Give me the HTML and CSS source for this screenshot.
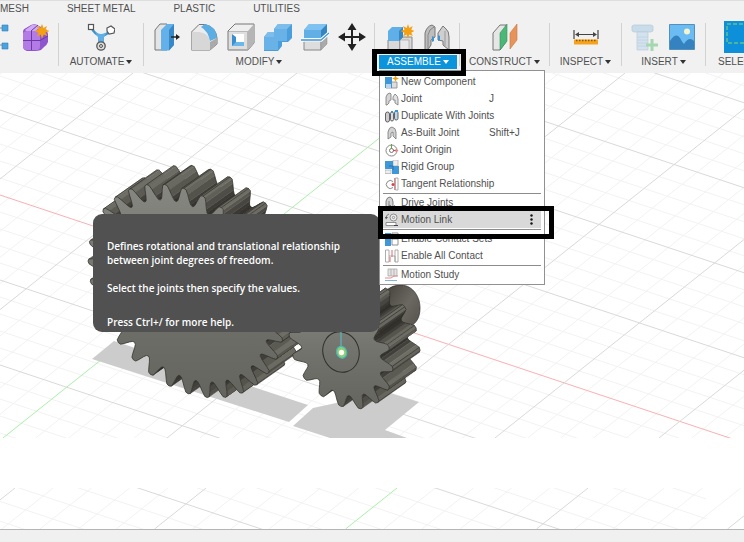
FILE: index.html
```html
<!DOCTYPE html>
<html lang="en">
<head>
<meta charset="utf-8">
<title>Assemble – Motion Link</title>
<meta name="viewport" content="width=device-width, initial-scale=1">
<link rel="stylesheet" href="styles.css">
</head>
<body>
<div class="app">
  <header class="ribbon">
    <nav class="tabs">
      <a href="#mesh">MESH</a>
      <a href="#sheet">SHEET METAL</a>
      <a href="#plastic">PLASTIC</a>
      <a href="#utilities">UTILITIES</a>
    </nav>
    <div class="groups">
      <section class="group group-first">
        <div class="icons">
          <svg class="icon" viewBox="0 0 28 28"><path d="M0 5H20M10 5V22M0 22H20" fill="none" stroke="#8a8a8a"/><path d="M18 2h6v6h-6zM18 20h6v6h-6z" fill="#4ba3e0" stroke="#2f82bd" stroke-width=".6"/></svg>
          <svg class="icon" viewBox="0 0 28 28"><path d="M2 9Q2 6 5 5L10 2Q12 1 15 1.500L24 6Q27 8 27 11V19Q26 22 23 24L20 27Q17 28 14 28H6Q2 27 2 23Z" fill="#8e55cc"/><path d="M2 10Q3 8 6 8H16Q19 8 19 12V23Q19 27 16 27H6Q2 27 2 23Z" fill="#b27be6"/><path d="M4 7L11 2Q15 1 19 4L15 8H5Z" fill="#d0aaf2"/><path d="M2 17.500H19L27 13M10.500 8V27M19 11L26 7M10 8L17 2" fill="none" stroke="#6b3aa8" stroke-width="1"/><path d="M21 1l1.500 4 3.500-2-1.500 3.700 4 1.300-4 1.500 2 3.500-3.700-1.500L21 15.500l-1.500-4-3.700 2 1.700-3.800-4-1.700 4-1.300L15.500 3l3.800 2z" fill="#f5a012"/></svg>
        </div>
      </section>
      <section class="group">
        <div class="icons">
          <svg class="icon" viewBox="0 0 28 28"><path d="M4 4Q8 12 14 13Q20 12 24 7M12.500 12V22M15.500 12V22" fill="none" stroke="#3d8fcb" stroke-width="2.500"/><path d="M8 9Q14 13 20 9L16 16V20H12V16Z" fill="#5fb0e6"/><rect x="1.500" y="1.500" width="5" height="5" fill="#fff" stroke="#555" stroke-width="1.200"/><path d="M20 5l4-2 4 3-1 4-5 1-2-3z" fill="#fff" stroke="#555" stroke-width="1.200"/><circle cx="14" cy="23" r="4.200" fill="#ddd" stroke="#555" stroke-width="1.300"/><circle cx="14" cy="23" r="1.500" fill="none" stroke="#555"/></svg>
        </div>
        <button class="label">AUTOMATE<i class="caret"></i></button>
      </section>
      <section class="group">
        <div class="icons">
          <svg class="icon" viewBox="0 0 28 28"><path d="M2 7L7 1H14V27H2Z" fill="#e4e4e4" stroke="#777"/><path d="M8 7L14 1H21V22L16 27.500H8Z" fill="#63b1e8"/><path d="M16 7L21 1V22L16 27.500Z" fill="#3788c6"/><path d="M18 14H24" stroke="#222" stroke-width="1.500"/><path d="M23 11l4 3-4 3z" fill="#222"/></svg>
          <svg class="icon" viewBox="0 0 28 28"><path d="M1.500 9L9 1.500H15Q26 4 27 15V21L20 27H1.500Z" fill="#ececec" stroke="#777"/><path d="M1.500 9H9Q19 10 20 19V27H1.500Z" fill="#d7d7d7"/><path d="M20 19L27 15V21L20 27Z" fill="#aaa"/><path d="M11 4L15 1Q26 3 27 15L20 18Q18 8 11 4Z" fill="#5dade5"/></svg>
          <svg class="icon" viewBox="0 0 28 28"><path d="M1 8L8 1H27V20L21 27H1Z" fill="#efefef" stroke="#777"/><path d="M21 8L27 1V20L21 27Z" fill="#b5b5b5"/><rect x="1.500" y="8.500" width="19" height="18" fill="#dedede" stroke="#999" stroke-width=".6"/><path d="M5 11H17V23H5Z" fill="#fff"/><path d="M5 11L9 14V19L17 20V23H5Z" fill="#3b8fce"/><path d="M9 19H17V23H5Z" fill="#6bb7ea"/></svg>
          <svg class="icon" viewBox="0 0 28 28"><path d="M10 6L14 1H28V15L24 19H18V23L14 28H0V14L4 9H10Z" fill="#4a9edb"/><path d="M10 6H23V18H14V27H0V14H10Z" fill="#68b2e8"/><path d="M10 6L14 1H28L23 6ZM0 14L4 9H10V14Z" fill="#7cbdeb"/></svg>
          <svg class="icon" viewBox="0 0 28 28"><path d="M3 18H20V27H3Z" fill="#ddd" stroke="#888"/><path d="M20 18L26 12V21L20 27Z" fill="#aaa" stroke="#888" stroke-width=".5"/><path d="M3 7L8 1H26V10L20 15H3Z" fill="#62afe6"/><path d="M20 7L26 1V10L20 15Z" fill="#3485c2"/><path d="M3 7L8 1H26L20 7Z" fill="#7fc1f0"/><path d="M0 17H20L28 10" fill="none" stroke="#fff" stroke-width="3.500"/><path d="M0 17H20L28 10" fill="none" stroke="#3d97d8" stroke-width="1.300"/></svg>
          <svg class="icon" viewBox="0 0 28 28"><path d="M14 5V24M5 14H23" stroke="#222" stroke-width="2"/><path d="M14 0l4.500 7h-9zM14 28l4.500-7h-9zM0 14l7-4.500v9zM28 14l-7-4.500v9z" fill="#222"/></svg>
        </div>
        <button class="label">MODIFY<i class="caret"></i></button>
      </section>
      <section class="group group-open">
        <div class="icons">
          <svg class="icon" viewBox="0 0 28 28"><path d="M2 17H14V28H2ZM14 17L17 14H26V27H14Z" fill="#d9d9d9" stroke="#888"/><path d="M14 17H23V28H14Z" fill="#e8e8e8" stroke="#999" stroke-width=".6"/><path d="M2 8L6 4H17V14L13 18H2Z" fill="#5fb0e8"/><path d="M13 8L17 4V14L13 18Z" fill="#3787c4"/><path d="M22 1l1.300 4 3.500-2-1.500 3.700 3 1.300-3 1.500 1.500 3.500-3.500-1.500L22 15.500l-1.500-4-3.500 2 1.500-3.800-4-1.700 4-1.300L17 3l3.700 2z" fill="#f5a012"/></svg>
          <svg class="icon" viewBox="0 0 28 28"><path d="M2 10Q4 3 9 2L12 4V14L8 17V22L4 28H2Z" fill="#bdbdbd" stroke="#777"/><path d="M5 12Q6 6 11 4M5 12V26" fill="none" stroke="#888"/><path d="M15 10L20 3L23 6Q26 8 26 14V27L20 22V18L15 17Z" fill="#cfcfcf" stroke="#777"/><path d="M22 8V23" stroke="#999"/><path d="M9 13l2 1v4l-2 1zM15 12l2 1v4l-2 1z" fill="#3d94d2"/></svg>
        </div>
        <button class="label label-open" aria-expanded="true">ASSEMBLE<i class="caret"></i></button>
        <span class="marker marker-button"></span>

        <div class="menu" role="menu">
          <button class="item" role="menuitem"><svg viewBox="0 0 14 14"><path d="M1 7H12V13H1Z" fill="#ddd" stroke="#888" stroke-width=".8"/><path d="M0 2H7V13H0Z" fill="#3f97d8"/><path d="M1 9H6V13H1Z" fill="#b9d6ec"/><path d="M10.500 0l1 2.500 2.500 1-2.500 1-1 2.500-1-2.500L7 3.500l2.500-1z" fill="#f5a012"/></svg><span>New Component</span></button>
          <button class="item" role="menuitem"><svg viewBox="0 0 14 14"><path d="M1 5Q2 1 5 1L6 2V8L4 9V11L2 13H1Z" fill="#d5d5d5" stroke="#777" stroke-width=".8"/><path d="M8 5L10 2Q13 4 13 7V13L10 11V8H8Z" fill="#e2e2e2" stroke="#777" stroke-width=".8"/></svg><span>Joint</span><kbd>J</kbd></button>
          <button class="item" role="menuitem"><svg viewBox="0 0 14 14"><g stroke="#555" stroke-width=".9"><rect x=".5" y="3" width="4" height="10" rx="2" fill="#ccc"/><rect x="5.500" y="3" width="3" height="9" rx="1.500" fill="#ddd"/><rect x="9.500" y="2" width="3.500" height="9" rx="1.700" fill="#bcd6ea"/></g><path d="M6 2h2v2h-2zM10 1h3v2h-3z" fill="#3d94d2"/></svg><span>Duplicate With Joints</span></button>
          <button class="item" role="menuitem"><svg viewBox="0 0 14 14"><path d="M3 13V6Q4 1 7 1Q11 2 11 6V13L8 10V6L6 7V11Z" fill="#d3d3d3" stroke="#777" stroke-width=".8"/></svg><span>As-Built Joint</span><kbd>Shift+J</kbd></button>
          <button class="item" role="menuitem"><svg viewBox="0 0 14 14"><circle cx="6.500" cy="7.500" r="5.500" fill="#fff" stroke="#888"/><circle cx="6.500" cy="7.500" r="2" fill="none" stroke="#777"/><path d="M6.500 6V1" stroke="#5ba845"/><path d="M8 7.500h3" stroke="#d9434a"/><path d="M10.500 5.500l3 2-3 2z" fill="#e8868a"/></svg><span>Joint Origin</span></button>
          <button class="item" role="menuitem"><svg viewBox="0 0 14 14"><path d="M8 0H13V6H8Z" fill="#eee" stroke="#aaa" stroke-width=".7"/><path d="M0 1H8V6H14V14H7V9H0Z" fill="#3f97d8"/><path d="M0 10H6V13.500H0Z" fill="#eee" stroke="#aaa" stroke-width=".7"/><path d="M4 6H8V10" fill="none" stroke="#1f6ba5" stroke-width=".8"/></svg><span>Rigid Group</span></button>
          <button class="item" role="menuitem"><svg viewBox="0 0 14 14"><path d="M8 4.500A4 4 0 1 0 8 10.500" fill="#fff" stroke="#888"/><path d="M10.500 1h2.500v12h-2.500z" fill="#fff" stroke="#999" stroke-width=".8"/><path d="M9.500 1V13" stroke="#e38a8e"/><circle cx="8" cy="7.500" r="1.500" fill="#d9434a"/></svg><span>Tangent Relationship</span></button>
          <hr>
          <button class="item" role="menuitem"><svg viewBox="0 0 14 14"><path d="M1 12V5Q2 1 5 1Q8 2 8 6V12L5 9Z" fill="#d3d3d3" stroke="#666" stroke-width=".8"/><path d="M4 12V5" stroke="#777" stroke-width=".8"/><path d="M9 9l4 3-3 1z" fill="#333"/></svg><span>Drive Joints</span></button>
          <div class="active">
            <button class="item" role="menuitem"><svg viewBox="0 0 14 14"><circle cx="8.500" cy="4.500" r="3.500" fill="#eee" stroke="#777" stroke-width=".8"/><circle cx="8.500" cy="4.500" r="1.200" fill="none" stroke="#777" stroke-width=".7"/><path d="M1 5Q1 2 4 1" fill="none" stroke="#666" stroke-width=".8"/><path d="M0 4h3l-2 2.500z" fill="#555"/><path d="M1 9.500H11V12.500H1Z" fill="#fff" stroke="#777" stroke-width=".8"/><path d="M9 12.500h4" stroke="#444"/></svg><span>Motion Link</span></button>
            <button class="more" aria-label="More options"><svg viewBox="0 0 5 13"><g fill="#111"><circle cx="2.500" cy="2.500" r="1.200"/><circle cx="2.500" cy="6.500" r="1.200"/><circle cx="2.500" cy="10.500" r="1.200"/></g></svg></button>
            <span class="marker marker-item"></span>
          </div>
          <hr>
          <button class="item" role="menuitem"><svg viewBox="0 0 14 14"><path d="M0 1H6V14H0Z" fill="#3f97d8"/><path d="M7 1H13V5H7ZM7 7H13V13H7Z" fill="#fff" stroke="#777" stroke-width=".8"/></svg><span>Enable Contact Sets</span></button>
          <button class="item" role="menuitem"><svg viewBox="0 0 14 14"><path d="M.5 1H4V13H.5ZM10 1H13V13H10Z" fill="#fff" stroke="#999" stroke-width=".8"/><path d="M4 7H10V13" fill="none" stroke="#999" stroke-width=".8"/><path d="M7 1V8M5 8V13" stroke="#e26a6f"/></svg><span>Enable All Contact</span></button>
          <hr>
          <button class="item" role="menuitem"><svg viewBox="0 0 14 14"><path d="M3 1H12V8H3Z" fill="#e4e4e4" stroke="#aaa" stroke-width=".8"/><path d="M6 1V8M9 1V8" stroke="#aaa" stroke-width=".8"/><path d="M0 10H6L9 8H13" fill="none" stroke="#e48a8e"/><path d="M0 12.500H12" stroke="#7fb6de"/></svg><span>Motion Study</span></button>
        </div>
      </section>
      <section class="group">
        <div class="icons">
          <svg class="icon" viewBox="0 0 28 28"><path d="M2 10L9 2H15V19L9 27H2Z" fill="#e6e6e6" stroke="#777"/><path d="M9 10L16 1V18L9 27Z" fill="#4cb878" stroke="#3a8f5c" stroke-width=".6"/><path d="M19 10L26 1V17L19 26Z" fill="#e8935a" stroke="#c47a48" stroke-width=".6"/></svg>
        </div>
        <button class="label">CONSTRUCT<i class="caret"></i></button>
      </section>
      <section class="group">
        <div class="icons">
          <svg class="icon" viewBox="0 0 28 28"><path d="M2 7V16M26 7V16M4 11.500H24" stroke="#444" stroke-width="1.200"/><path d="M3 11.500l4-2.500v5zM25 11.500l-4-2.500v5z" fill="#444"/><path d="M2 16.500H26V21.500H2Z" fill="#f5a31d"/><path d="M4 17.500H25" stroke="#8a5a08" stroke-width="1.500" stroke-dasharray="1.500 1.500"/></svg>
        </div>
        <button class="label">INSPECT<i class="caret"></i></button>
      </section>
      <section class="group">
        <div class="icons">
          <svg class="icon" viewBox="0 0 28 28"><path d="M1 3L3 2H20L22 3V8L20 9H3L1 8Z" fill="#c9dcea" stroke="#b5c9d8" stroke-width=".7"/><path d="M6 9H17V27H6Z" fill="#d3e2ee" stroke="#b9ccda" stroke-width=".7"/><path d="M6 14H17M6 17H17M6 20H17M6 23H17" stroke="#bfd2e0" stroke-width=".8"/><path d="M19.500 16h3v4.500H27v3h-4.500V28h-3v-4.500H15v-3h4.500z" fill="#a5d8b0"/></svg>
          <svg class="icon" viewBox="0 0 28 28"><path d="M1.500 1.500H26.500V26.500H1.500Z" fill="#6bbcf2" stroke="#5590ba"/><circle cx="19" cy="8.500" r="3" fill="#f6f3cf"/><path d="M2 18Q8 9 12 15Q14 19 16 21Q21 13 26 18V26H2Z" fill="#3482c0"/></svg>
        </div>
        <button class="label">INSERT<i class="caret"></i></button>
      </section>
      <section class="group group-last">
        <div class="icons">
          <svg class="icon select-icon" viewBox="0 0 32 32"><path d="M0 0H32V32H0Z" fill="#0d8fda"/><path d="M3 3H29V22H3Z" fill="none" stroke="#5fc48d" stroke-width="1.500" stroke-dasharray="4 2"/></svg>
        </div>
        <button class="label">SELECT<i class="caret"></i></button>
      </section>
    </div>
  </header>

  <main class="viewport">
    <svg id="scene" class="scene" viewBox="0 73 744 365" preserveAspectRatio="xMinYMin slice" aria-label="Two meshing gears">
      <defs>
        <linearGradient id="face" x1="0" y1="0" x2="0" y2="1"><stop offset="0" stop-color="#868780"/><stop offset=".55" stop-color="#70716b"/><stop offset="1" stop-color="#64655e"/></linearGradient>
        <linearGradient id="hub" x1="0" y1="0" x2="1" y2="1"><stop offset="0" stop-color="#3d3b34"/><stop offset=".5" stop-color="#6a6860"/><stop offset="1" stop-color="#4a4841"/></linearGradient>
      </defs>
      <g id="grid"></g>
      <g fill="#cccccc">
        <path d="M92 359L114 341L308 405L289 422Z"/>
        <path d="M313 408L293 426L330 438H407L385 430L419 402L387 392Z"/>
      </g>
      <g id="wheel"></g>
      <path d="M380 300Q386 286 399 285C411 284 420 295 420 308C420 318 416 323 411 326L380 345Z" fill="url(#hub)" stroke="#2e2d28" stroke-width=".7"/>
      <g id="pinion"></g>
      <ellipse cx="341" cy="352" rx="18" ry="20.500" transform="rotate(-18 341 352)" fill="none" stroke="#2e2e2b"/>
      <path d="M341 332V348" stroke="#56c3cc"/>
      <ellipse cx="341.500" cy="352.500" rx="5" ry="6" transform="rotate(-20 341 352)" fill="#8fce77" stroke="#49b8b5" stroke-width="1.200"/>
      <circle cx="341.500" cy="352.500" r="2.700" fill="#fffef0"/>
    </svg>
    <aside class="tooltip" role="tooltip">
      <p>Defines rotational and translational relationship<br>between joint degrees of freedom.</p>
      <p>Select the joints then specify the values.</p>
      <p class="help">Press Ctrl+/ for more help.</p>
    </aside>
  </main>

  <div class="lower-view">
    <svg id="strip" class="strip" viewBox="0 488 744 41" preserveAspectRatio="xMinYMin slice" aria-hidden="true"></svg>
  </div>
  <footer class="statusbar"></footer>
</div>
<script src="scene.js"></script>
</body>
</html>
```
FILE: styles.css
```css
* {
  box-sizing: border-box;
}

body {
  margin: 0;
  background: #fff;
  color: #505050;
  font: 10px/14px "Liberation Sans", Arial, sans-serif;
}

button {
  margin: 0;
  padding: 0;
  border: 0;
  background: none;
  color: inherit;
  font: inherit;
}

.app {
  display: flex;
  flex-direction: column;
  min-height: 100vh;
  overflow: hidden;
}

.ribbon {
  background: #f1f1f1;
  border-top: 1px solid #dedede;
}

.tabs {
  display: flex;
  gap: 38px;
  padding-top: 1px;
}

.tabs a {
  color: inherit;
  text-decoration: none;
  white-space: nowrap;
}

.groups {
  display: grid;
  grid-template-columns: 59px 85px 231px 85px 90px 72px 84px 1fr;
  padding: 7px 0;
}

.group {
  position: relative;
  display: flex;
  flex-direction: column;
  align-items: center;
  height: 43px;
  min-width: 0;
  border-right: 1px solid #d2d2d2;
}

.icons {
  display: flex;
  gap: 9px;
}

.icon {
  display: block;
  flex: none;
  width: 28px;
  height: 28px;
}

.group-first {
  align-items: flex-end;
  padding-right: 9px;
}

.group-last {
  align-items: flex-start;
  padding-left: 12px;
  border: 0;
}

.group-last .icons {
  padding-left: 6px;
}

.select-icon {
  width: 32px;
  height: 32px;
  margin: -2px 0;
}

.label {
  display: flex;
  align-items: center;
  gap: 2px;
  height: 14px;
  margin-top: 4px;
  white-space: nowrap;
}

.caret {
  border: 3px solid transparent;
  border-top: 4px solid #333;
  border-bottom: 0;
}

.label-open {
  justify-content: center;
  width: 78px;
  background: #0b93dc;
  color: #fff;
}

.label-open .caret {
  border-top-color: #fff;
}

.group-open {
  padding-left: 2px;
}

.marker {
  position: absolute;
  z-index: 3;
  border: 5px solid #000;
  pointer-events: none;
}

.marker-button {
  top: 26px;
  left: -3px;
  width: 94px;
  height: 27px;
}

.menu {
  position: absolute;
  z-index: 2;
  top: 47px;
  left: 4px;
  width: 166px;
  padding: 2px 3px 1px;
  border: 1px solid #919191;
  background: #fff;
}

.menu hr {
  height: 1px;
  margin: 1px 0 0;
  border: 0;
  background: #8c8c8c;
}

.item {
  display: grid;
  grid-template-columns: 14px 86px 1fr;
  gap: 2px;
  align-items: center;
  width: 100%;
  height: 17px;
  padding-left: 2px;
  text-align: left;
  white-space: nowrap;
}

.item svg {
  width: 14px;
  height: 14px;
}

.item kbd {
  font: inherit;
}

.active {
  position: relative;
  background: #d9d9d9;
}

.more {
  position: absolute;
  top: 2px;
  right: 7px;
  width: 5px;
  height: 13px;
}

.more svg {
  display: block;
  width: 5px;
  height: 13px;
}

.marker-item {
  top: -5px;
  right: -13px;
  left: -5px;
  height: 33px;
}

.viewport {
  position: relative;
}

.scene {
  display: block;
  width: 100%;
  height: 365px;
}

.tooltip {
  position: absolute;
  top: 141px;
  left: 93px;
  width: 287px;
  padding: 25px 14px 3px;
  border-radius: 9px;
  background: #515151;
  color: #fff;
  font: 600 10px/14px "Open Sans", "Noto Sans", sans-serif;
  white-space: nowrap;
}

.tooltip p {
  margin: 0 0 14px;
}

.tooltip .help {
  margin: 20px 0 0;
}

.lower-view {
  margin-top: 50px;
}

.strip {
  display: block;
  width: 100%;
  height: 41px;
}

.statusbar {
  flex: 1;
  min-height: 13px;
  border-top: 1px solid #b5b5b5;
  background: #f0f0f0;
}
```
FILE: scene.js
```js
const NS = "http://www.w3.org/2000/svg";

function add(parent, tag, attrs) {
  const el = document.createElementNS(NS, tag);
  for (const key in attrs) el.setAttribute(key, attrs[key]);
  parent.appendChild(el);
}

function line(parent, x1, y1, x2, y2, stroke) {
  add(parent, "line", { x1, y1, x2, y2, stroke, "stroke-width": 1 });
}

/* Two families of parallel grid lines; every fifth line is a major one. */
function drawGrid(parent, g) {
  const major = "#d9d9d9";
  const minor = "#f2f2f2";
  for (const pass of [minor, major]) {
    for (let i = -60; i <= 60; i++) {
      const isMajor = i % 5 === 0;
      if ((pass === major) !== isMajor) continue;
      const x = g.x + (i * g.stepX) / 5;
      line(parent, x, g.top, x - (g.bottom - g.top) * 1.255, g.bottom, i === 0 ? "#a9f0a9" : pass);
      const y = g.y + (i * g.stepY) / 5;
      line(parent, 0, y, g.right, y + g.right * 0.333, i === 0 && g.red ? "#f9b0b4" : pass);
    }
  }
}

function shade(k) {
  const dark = [42, 40, 35];
  const light = [136, 136, 127];
  return "rgb(" + dark.map((d, i) => Math.round(d + (light[i] - d) * k)).join() + ")";
}

/* A spur gear seen at an angle: the tooth outline is extruded along (ex, ey). */
function drawGear(parent, g) {
  const rad = Math.PI / 180;
  const pitch = 360 / g.teeth;
  const at = k => g.root + (1 - g.root) * k;
  const profile = [[-0.5, 0], [-0.4, 0.06], [-0.31, 0.28], [-0.2, 0.68], [-0.12, 0.94], [0, 1],
    [0.12, 0.94], [0.2, 0.68], [0.31, 0.28], [0.4, 0.06]];
  const pts = [];
  for (let i = 0; i < g.teeth; i++) {
    for (const [f, k] of profile) {
      const t = (g.phase + (i + f) * pitch) * rad;
      const r = at(k);
      pts.push([g.cx + g.rx * r * Math.cos(t), g.cy + g.ry * r * Math.cos(t - 72.5 * rad), k]);
    }
  }
  let area = 0;
  pts.forEach((p, i) => {
    const q = pts[(i + 1) % pts.length];
    area += p[0] * q[1] - q[0] * p[1];
  });
  const sign = Math.sign(area);
  const quads = [];
  pts.forEach((p, i) => {
    const q = pts[(i + 1) % pts.length];
    const len = Math.hypot(q[0] - p[0], q[1] - p[1]);
    const nx = (sign * (q[1] - p[1])) / len;
    const ny = (-sign * (q[0] - p[0])) / len;
    if (nx * g.ex + ny * g.ey <= 0) return;
    const height = (p[2] + q[2]) / 2;
    const lit = Math.max(0, nx * 0.45 - ny * 0.5 + 0.02);
    quads.push({
      depth: (p[0] + q[0]) * g.ex + (p[1] + q[1]) * g.ey,
      light: Math.min(1, lit * (0.15 + 0.9 * Math.min(1, height * 1.4))),
      rim: height > 0.9 || height < 0.1,
      p, q
    });
  });
  quads.sort((a, b) => a.depth - b.depth);
  for (const { p, q, light, rim } of quads) {
    const fill = shade(light);
    const a = `${p[0]} ${p[1]}`;
    const b = `${q[0]} ${q[1]}`;
    const a2 = `${p[0] + g.ex} ${p[1] + g.ey}`;
    const b2 = `${q[0] + g.ex} ${q[1] + g.ey}`;
    add(parent, "path", { d: `M${a}L${b}L${b2}L${a2}Z`, fill, stroke: fill, "stroke-width": 0.5 });
    add(parent, "path", {
      d: rim ? `M${a}L${a2}L${b2}` : `M${a2}L${b2}`,
      fill: "none", stroke: "#24231d", "stroke-opacity": 0.8, "stroke-width": 0.7
    });
  }
  add(parent, "path", {
    d: "M" + pts.map(p => `${p[0]} ${p[1]}`).join("L") + "Z",
    fill: "url(#face)", stroke: "#33322c", "stroke-width": 0.8
  });
}

const byId = id => document.getElementById(id);

drawGrid(byId("grid"), { x: 461, stepX: 164, y: 195, stepY: 85, top: 73, bottom: 438, right: 744, red: true });
drawGrid(byId("strip"), { x: 397, stepX: 191, y: 343, stepY: 99, top: 488, bottom: 529, right: 706, red: false });
drawGear(byId("wheel"), { cx: 186, cy: 291, rx: 98, ry: 107, teeth: 32, phase: 100, root: 0.85, ex: 27, ey: -19 });
drawGear(byId("pinion"), { cx: 341, cy: 352, rx: 52, ry: 57, teeth: 16, phase: 90, root: 0.77, ex: 27, ey: -19 });
```
